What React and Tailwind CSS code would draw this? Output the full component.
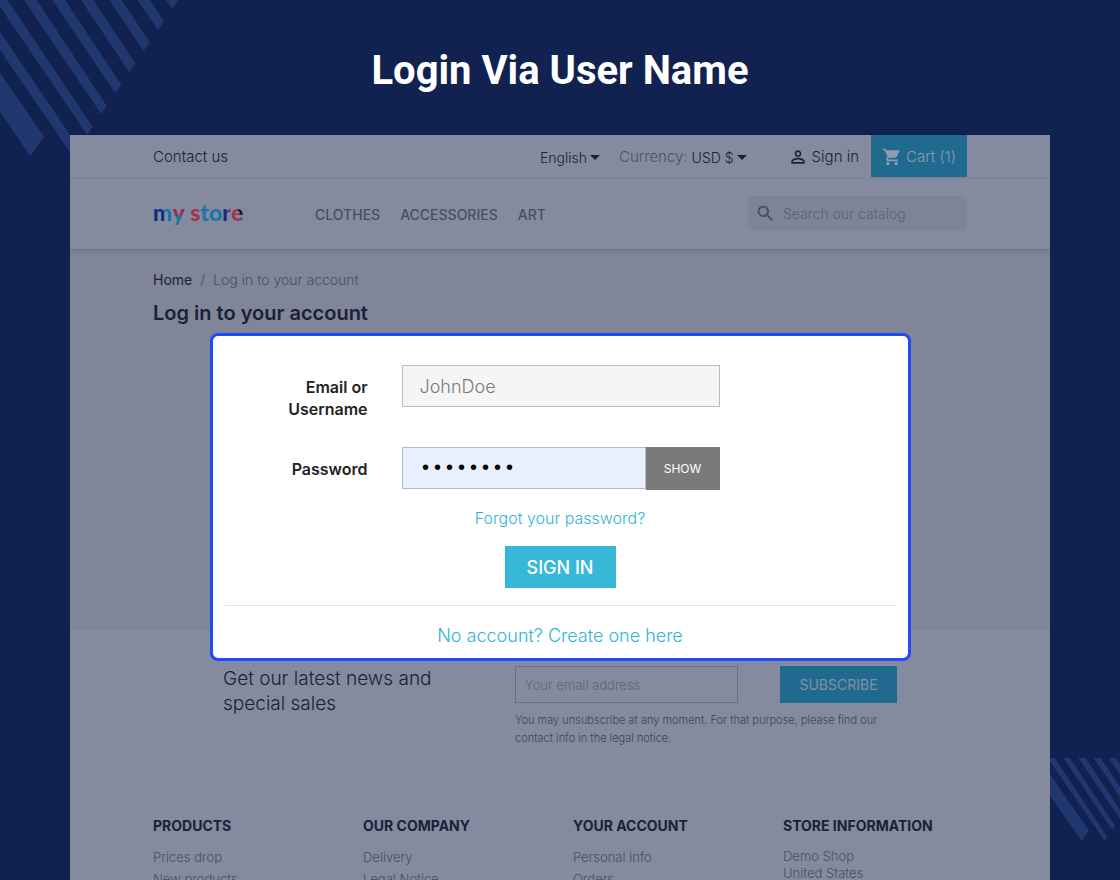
import React from "react";
import {
  MdArrowDropDown,
  MdPersonOutline,
  MdSearch,
  MdShoppingCart,
} from "react-icons/md";

function StripesTop() {
  return (
    <svg
      className="absolute left-0 top-0 h-[160px] w-[180px] fill-[#21376f]"
      viewBox="0 0 540 480"
      aria-hidden="true"
    >
      <path d="M0 218 132 410 91 468 0 335Z" />
      <path d="M0 95 235 441 218 469 0 150Z" />
      <path d="M0 0H22L278 380 262 405 0 20Z" />
      <path d="M72 0H110L320 317 304 343Z" />
      <path d="M157 0H195L364 254 346 280Z" />
      <path d="M243 0H280L406 190 388 217Z" />
      <path d="M328 0H365L449 127 431 153Z" />
      <path d="M413 0H450L492 64 474 90Z" />
      <path d="M498 0H535L518 26Z" />
    </svg>
  );
}

function StripesBottom() {
  return (
    <svg
      className="absolute right-0 top-[758px] h-[84px] w-[70px] fill-[#21376f]"
      viewBox="0 0 210 252"
      aria-hidden="true"
    >
      <path d="M0 49 116 217 96 249 0 113Z" />
      <path d="M0 0H14L172 237 164 249 0 10Z" />
      <path d="M40 0H60L195 203 187 216Z" />
      <path d="M85 0H106L210 155V183Z" />
      <path d="M131 0H152L210 86V117Z" />
      <path d="M176 0H197L210 19V50Z" />
    </svg>
  );
}

function Logo() {
  return (
    <a href="#" className="flex font-['Lato'] text-[23px] font-black leading-[30px]">
      <span className="bg-linear-to-r from-[#152a80] from-55% to-[#1b76a5] to-60% bg-clip-text text-transparent">m</span>
      <span className="bg-linear-to-b from-[#962f4c] from-65% to-[#1b76a5] to-65% bg-clip-text text-transparent">y</span>
      <span className="whitespace-pre"> </span>
      <span className="text-[#a0364f]">s</span>
      <span className="text-[#1b76a5]">t</span>
      <span className="text-[#1b76a5]">o</span>
      <span className="bg-linear-to-r from-[#152a80] from-60% to-[#82307f] to-60% bg-clip-text text-transparent">r</span>
      <span className="bg-linear-to-tr from-[#a0364f] from-55% to-[#161d3a] to-60% bg-clip-text text-transparent">e</span>
    </a>
  );
}

function Header() {
  return (
    <header className="relative z-10 bg-[#848b9e] shadow-[0_2px_5px_rgba(30,40,80,0.22)]">
      <div className="border-b-2 border-[#7e8499]">
        <div className="mx-auto flex h-[42px] max-w-[814px] items-center text-[15px] text-[#1a2138]">
          <a href="#" className="pt-0.5 font-light">Contact us</a>
          <div className="ml-auto flex h-full items-center font-light">
            <div className="flex items-center pt-0.5">
              <button type="button" className="flex items-center text-[14px]">
                English
                <MdArrowDropDown className="-mx-1 size-6" />
              </button>
              <div className="ml-4 flex items-center">
                <span className="mr-1 text-[#4b5268]">Currency:</span>
                <button type="button" className="flex items-center text-[14px]">
                  USD $
                  <MdArrowDropDown className="-mx-1 size-6" />
                </button>
              </div>
              <a href="#" className="ml-[38px] flex items-center gap-1">
                <MdPersonOutline className="size-5" />
                Sign in
              </a>
            </div>
            <a
              href="#"
              className="ml-3 flex h-full w-[96px] items-center justify-center gap-1 bg-[#1f6a8e] pt-0.5 text-[#8e9bb0]"
            >
              <MdShoppingCart className="size-5" />
              Cart (1)
            </a>
          </div>
        </div>
      </div>
      <div className="mx-auto flex h-[70px] max-w-[814px] items-center">
        <div className="w-[162px] pb-1">
          <Logo />
        </div>
        <nav className="flex gap-5 text-[14px] font-medium text-[#474e64]">
          <a href="#">CLOTHES</a>
          <a href="#">ACCESSORIES</a>
          <a href="#">ART</a>
        </nav>
        <label className="mb-0.5 ml-auto flex h-[35px] w-[219px] items-center rounded-[5px] bg-[#7e8397] px-[7px]">
          <MdSearch className="size-[21px] shrink-0 text-[#454c62]" />
          <input
            type="search"
            aria-label="Search our catalog"
            placeholder="Search our catalog"
            className="ml-[7px] w-full min-w-0 bg-transparent text-[14px] font-light outline-none placeholder:text-[#5b6176]"
          />
        </label>
      </div>
    </header>
  );
}

function LoginCard() {
  return (
    <form
      className="w-[701px] rounded-lg border-[3px] border-[#2348f5] bg-white px-3 pt-[29px] pb-[9px] text-[#232323]"
      onSubmit={(e) => e.preventDefault()}
    >
      <div className="flex items-start">
        <label
          htmlFor="username"
          className="mr-[34px] w-[143px] pt-[11px] pl-12 text-right text-[16px] font-semibold leading-[22px]"
        >
          Email or Username
        </label>
        <input
          id="username"
          type="text"
          placeholder="JohnDoe"
          className="h-[42px] w-[318px] border border-[#bcbcbc] bg-[#f5f5f5] px-[17px] text-[18px] font-light outline-none placeholder:text-[#7a7a7a]"
        />
      </div>
      <div className="mt-[27px] flex items-start">
        <label
          htmlFor="password"
          className="mr-[34px] w-[143px] pt-[11px] text-right text-[16px] font-semibold leading-[22px]"
        >
          Password
        </label>
        <input
          id="password"
          type="password"
          defaultValue="password"
          className="h-[42px] w-[244px] border border-[#b3b9c6] bg-[#e8f0fe] px-[17px] font-['Liberation_Mono'] text-[20px] text-black outline-none"
        />
        <button
          type="button"
          className="h-[43px] w-[74px] bg-[#7a7a7a] text-[12px] text-white"
        >
          SHOW
        </button>
      </div>
      <div className="mt-4 flex flex-col items-center">
        <a href="#" className="text-[16px] font-light leading-6 text-[#2fb5d2]">
          Forgot your password?
        </a>
        <button
          type="submit"
          className="mt-4 h-[42px] w-[111px] bg-[#38b8d9] text-[18px] font-medium text-white"
        >
          SIGN IN
        </button>
      </div>
      <hr className="mt-[17px] border-[#e2e2e2]" />
      <div className="mt-[17px] text-center">
        <a href="#" className="text-[18px] font-light leading-[26px] text-[#2fb5d2]">
          No account? Create one here
        </a>
      </div>
    </form>
  );
}

function Newsletter() {
  return (
    <section className="mx-auto flex max-w-[674px] justify-between pt-9">
      <p className="w-[220px] text-[19px] font-light leading-[25px] text-[#1a2138]">
        Get our latest news and special sales
      </p>
      <form className="w-[382px]" onSubmit={(e) => e.preventDefault()}>
        <div className="flex justify-between">
          <input
            type="email"
            aria-label="Your email address"
            placeholder="Your email address"
            className="h-[37px] w-[223px] border border-[#697086] bg-transparent px-[9px] text-[13px] font-light outline-none placeholder:text-[#5f667c]"
          />
          <button
            type="submit"
            className="h-[37px] w-[117px] bg-[#1f6a8e] text-[14px] text-[#8590a6]"
          >
            SUBSCRIBE
          </button>
        </div>
        <p className="mt-2 text-[11px] font-light leading-[18px] text-[#3d445a]">
          You may unsubscribe at any moment. For that purpose, please find our
          contact info in the legal notice.
        </p>
      </form>
    </section>
  );
}

const columns = [
  { title: "PRODUCTS", links: ["Prices drop", "New products"] },
  { title: "OUR COMPANY", links: ["Delivery", "Legal Notice"] },
  { title: "YOUR ACCOUNT", links: ["Personal info", "Orders"] },
];

function Footer() {
  return (
    <footer className="mx-auto mt-[69px] grid max-w-[814px] grid-cols-4 gap-[26px] text-[13px] font-light text-[#474e64]">
      {columns.map((column) => (
        <div key={column.title}>
          <h2 className="text-[14px] font-bold leading-5 text-[#1a2138]">{column.title}</h2>
          <ul className="mt-[10px] leading-[22px]">
            {column.links.map((link) => (
              <li key={link}>
                <a href="#">{link}</a>
              </li>
            ))}
          </ul>
        </div>
      ))}
      <div>
        <h2 className="whitespace-nowrap text-[14px] font-bold leading-5 text-[#1a2138]">
          STORE INFORMATION
        </h2>
        <address className="mt-3 not-italic leading-[17px]">
          Demo Shop
          <br />
          United States
        </address>
      </div>
    </footer>
  );
}

export default function App() {
  return (
    <div className="relative flex h-screen flex-col overflow-hidden bg-[#112150] font-['Inter',sans-serif]">
      <StripesTop />
      <StripesBottom />
      <h1 className="relative pt-[47px] pb-10 text-center font-['Roboto',sans-serif] text-[40px] font-bold leading-[48px] text-white">
        Login Via User Name
      </h1>
      <div className="relative mx-[70px] grow bg-[#848b9e]">
        <Header />
        <main className="relative h-[381px] bg-[#808598]">
          <div className="mx-auto max-w-[814px] pt-5">
            <nav className="flex gap-2 text-[14px] font-light leading-[22px] text-[#474e64]">
              <a href="#" className="font-normal text-[#1a2138]">Home</a>
              <span>/</span>
              <span>Log in to your account</span>
            </nav>
            <h2 className="mt-[9px] text-[20px] font-semibold leading-[26px] text-[#1a2138]">
              Log in to your account
            </h2>
          </div>
          <div className="absolute inset-x-0 top-[84px] z-10 flex justify-center">
            <LoginCard />
          </div>
        </main>
        <Newsletter />
        <Footer />
        <div className="absolute bottom-0 left-[9px] h-[6px] w-[31px] bg-[#141c35]" />
      </div>
    </div>
  );
}
